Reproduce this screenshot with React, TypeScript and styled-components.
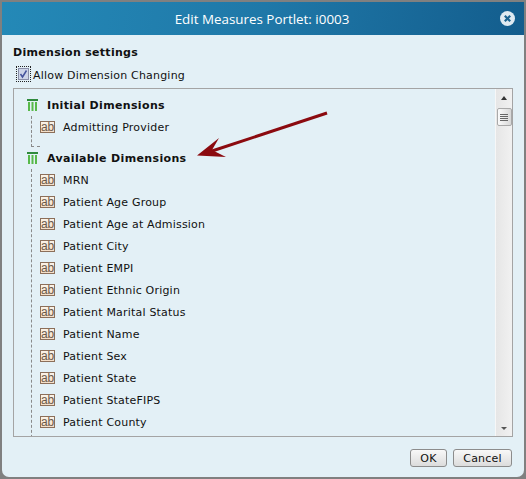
import React from "react";
import styled, { createGlobalStyle } from "styled-components";

const Global = createGlobalStyle`
  html, body { margin: 0; padding: 0; background: #7f7f7f; }
  #root { width: 526px; height: 479px; }
  * { box-sizing: border-box; }
`;

const Page = styled.div`
  position: relative;
  width: 526px;
  height: 479px;
  padding: 2px 2px 2px 2px;
  background: #808080;
  font-family: "DejaVu Sans", Verdana, sans-serif;
  font-size: 11px;
  letter-spacing: 0.2px;
  color: #111;
`;

const Dialog = styled.div`
  width: 522px;
  height: 475px;
  display: flex;
  flex-direction: column;
  background: #e3f0f6;
  border-radius: 0 0 7px 7px;
  overflow: hidden;
`;

const Header = styled.div`
  position: relative;
  flex: 0 0 33px;
  display: flex;
  align-items: center;
  justify-content: center;
  padding-right: 2px;
  background: linear-gradient(100deg, #2489b7 0%, #1f78a8 50%, #135d8d 100%);
  color: #fff;
  font-family: "Open Sans", sans-serif;
  font-size: 13.4px;
  letter-spacing: 0;
`;

const CloseIcon = styled.svg`
  position: absolute;
  right: 9px;
  top: 9px;
  width: 15px;
  height: 15px;
`;

const Body = styled.div`
  flex: 1;
  display: flex;
  flex-direction: column;
  padding: 11px 11px 0 11px;
`;

const SectionTitle = styled.div`
  font-weight: bold;
  letter-spacing: 0.3px;
  line-height: 13px;
  height: 13px;
  margin-bottom: 7px;
`;

const CheckRow = styled.label`
  display: flex;
  align-items: center;
  height: 16px;
  margin: 0 0 6px 3px;
  line-height: 16px;
`;

const CheckFocus = styled.span`
  display: flex;
  align-items: center;
  justify-content: center;
  width: 15px;
  height: 16px;
  margin-right: 2px;
  outline: 1px dotted #222;
  outline-offset: -1px;
`;

const CheckBox = styled.svg`
  width: 11px;
  height: 12px;
`;

const CheckLabel = styled.span`
  margin-top: 3px;
`;

const Panel = styled.div`
  display: flex;
  width: 500px;
  height: 349px;
  border: 1px solid #a4a4a4;
  overflow: hidden;
`;

const Tree = styled.div`
  flex: 1;
  padding: 5px 0 0 13px;
  overflow: hidden;
`;

const GroupRow = styled.div<{ $gap?: number }>`
  display: flex;
  align-items: center;
  height: 22px;
  margin-top: ${(p) => p.$gap ?? 0}px;
  font-weight: bold;
  letter-spacing: 0.35px;
`;

const GroupIcon = styled.svg`
  width: 11px;
  height: 12px;
  margin-right: 9px;
  flex: none;
`;

const Branch = styled.div<{ $elbow?: boolean }>`
  position: relative;
  margin-left: 4px;
  &::before {
    content: "";
    position: absolute;
    left: 0;
    top: 0;
    bottom: ${(p) => (p.$elbow ? "-9px" : "-40px")};
    border-left: 1px dashed #8a8a8a;
  }
  ${(p) =>
    p.$elbow &&
    `&::after {
      content: "";
      position: absolute;
      left: 0;
      bottom: -9px;
      width: 9px;
      border-bottom: 1px dashed #8a8a8a;
    }`}
`;

const LeafRow = styled.div`
  display: flex;
  align-items: center;
  height: 22px;
  padding-left: 9px;
`;

const AbIcon = styled.span`
  flex: none;
  width: 15px;
  height: 12px;
  margin-right: 8px;
  border: 1px solid #8b6f5a;
  background: linear-gradient(#fbf3e8, #f5dfc8);
  color: #6b5a4c;
  font-family: "Liberation Sans", sans-serif;
  font-size: 12px;
  line-height: 11px;
  text-align: center;
  letter-spacing: -0.2px;
`;

const ScrollBar = styled.div`
  position: relative;
  flex: 0 0 17px;
  border-left: 1px solid #f7f7f7;
  background: linear-gradient(90deg, #e6e6e6, #f1f1f1);
  display: flex;
  flex-direction: column;
  align-items: center;
  height: 100%;
`;

const ArrowUp = styled.span`
  margin-top: 7px;
  width: 0;
  height: 0;
  border-left: 3.5px solid transparent;
  border-right: 3.5px solid transparent;
  border-bottom: 4px solid #333;
`;

const Thumb = styled.div`
  margin-top: 8px;
  width: 15px;
  height: 18px;
  border: 1px solid #a9a9a9;
  border-radius: 2px;
  background: linear-gradient(90deg, #fafafa, #d8d8d8);
  display: flex;
  flex-direction: column;
  align-items: center;
  justify-content: center;
  gap: 1px;
`;

const Grip = styled.span`
  width: 8px;
  height: 1px;
  background: #666;
`;

const ArrowDown = styled.span`
  margin-top: auto;
  margin-bottom: 6px;
  width: 0;
  height: 0;
  border-left: 3.5px solid transparent;
  border-right: 3.5px solid transparent;
  border-top: 3px solid #555;
`;

const Footer = styled.div`
  display: flex;
  justify-content: flex-end;
  gap: 6px;
  padding: 12px 1px 0 0;
`;

const Button = styled.button<{ $w: number }>`
  width: ${(p) => p.$w}px;
  height: 18px;
  padding: 0;
  border: 1px solid #8c8c8c;
  border-radius: 3px;
  background: linear-gradient(#f8f8f8, #dcdcdc);
  font-family: "DejaVu Sans", Verdana, sans-serif;
  font-size: 11px;
  letter-spacing: 0.2px;
  color: #111;
  line-height: 15px;
`;

const Annotation = styled.svg`
  position: absolute;
  left: 0;
  top: 0;
  width: 526px;
  height: 479px;
  pointer-events: none;
`;

const Group = () => (
  <GroupIcon viewBox="0 0 11 12">
    <rect x="0" y="0" width="11" height="2" fill="#2f8a3c" />
    <rect x="1" y="3" width="2" height="9" fill="#58b94a" />
    <rect x="4.5" y="3" width="2" height="9" fill="#58b94a" />
    <rect x="8" y="3" width="2" height="9" fill="#58b94a" />
  </GroupIcon>
);

const Leaf = ({ label }: { label: string }) => (
  <LeafRow>
    <AbIcon>ab</AbIcon>
    {label}
  </LeafRow>
);

const available = [
  "MRN",
  "Patient Age Group",
  "Patient Age at Admission",
  "Patient City",
  "Patient EMPI",
  "Patient Ethnic Origin",
  "Patient Marital Status",
  "Patient Name",
  "Patient Sex",
  "Patient State",
  "Patient StateFIPS",
  "Patient County",
];

export default function App() {
  return (
    <Page>
      <Global />
      <Dialog>
        <Header>
          Edit Measures Portlet: i0003
          <CloseIcon viewBox="0 0 15 15">
            <circle cx="7.5" cy="7.5" r="7.5" fill="#dfeaf1" />
            <path d="M4.8 4.8l5.4 5.4M10.2 4.8l-5.4 5.4" stroke="#1b6390" strokeWidth="2.2" />
          </CloseIcon>
        </Header>
        <Body>
          <SectionTitle>Dimension settings</SectionTitle>
          <CheckRow>
            <CheckFocus>
              <CheckBox viewBox="0 0 11 12">
                <rect x="0.5" y="0.5" width="10" height="11" fill="#cdd5e8" stroke="#8a8fa8" />
                <path d="M2.5 6l2 3 4-6.5" fill="none" stroke="#45549c" strokeWidth="1.5" />
              </CheckBox>
            </CheckFocus>
            <CheckLabel>Allow Dimension Changing</CheckLabel>
          </CheckRow>
          <Panel>
            <Tree>
              <GroupRow>
                <Group />
                Initial Dimensions
              </GroupRow>
              <Branch $elbow>
                <Leaf label="Admitting Provider" />
              </Branch>
              <GroupRow $gap={9}>
                <Group />
                Available Dimensions
              </GroupRow>
              <Branch>
                {available.map((name) => (
                  <Leaf key={name} label={name} />
                ))}
              </Branch>
            </Tree>
            <ScrollBar>
              <ArrowUp />
              <Thumb>
                <Grip />
                <Grip />
                <Grip />
                <Grip />
              </Thumb>
              <ArrowDown />
            </ScrollBar>
          </Panel>
          <Footer>
            <Button $w={37}>OK</Button>
            <Button $w={59}>Cancel</Button>
          </Footer>
        </Body>
      </Dialog>
      <Annotation viewBox="0 0 526 479">
        <path d="M327 113L212 151" stroke="#8b0a0f" strokeWidth="3" fill="none" />
        <path d="M197 155.5L219 138L212 150L226 157Z" fill="#8b0a0f" />
      </Annotation>
    </Page>
  );
}
